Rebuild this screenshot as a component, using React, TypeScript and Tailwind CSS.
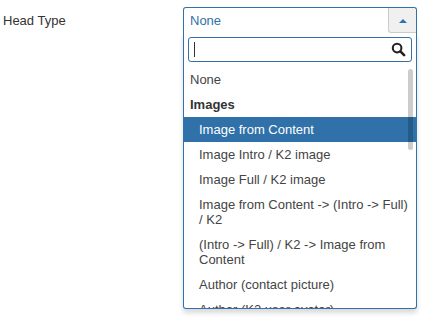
import React from "react";

const options: { label: string; group?: boolean; child?: boolean; active?: boolean }[] = [
  { label: "None" },
  { label: "Images", group: true },
  { label: "Image from Content", child: true, active: true },
  { label: "Image Intro / K2 image", child: true },
  { label: "Image Full / K2 image", child: true },
  { label: "Image from Content -> (Intro -> Full) / K2", child: true },
  { label: "(Intro -> Full) / K2 -> Image from Content", child: true },
  { label: "Author (contact picture)", child: true },
  { label: "Author (K2 user avatar)", child: true },
];

export default function App() {
  return (
    <div className="flex h-[317px] w-[423px] bg-white pt-[7px] font-['Liberation_Sans',Arial,sans-serif] text-[13px] text-[#333]">
      <div className="w-[183px] pl-[3px] pt-[6px] leading-[15px]">Head Type</div>

      <div className="relative w-[234px]">
        {/* Select box */}
        <div className="flex h-[26px] rounded-t-[3px] border border-b-0 border-[#3071a9] bg-white">
          <span className="flex-1 pl-[6px] pt-[5px] leading-[15px] text-[#3071a9]">None</span>
          <div className="flex w-[28px] items-center justify-center rounded-bl-[3px] rounded-tr-[3px] border-b border-l border-[#ccc] bg-[#f0f0f0]">
            <svg width="8" height="5" viewBox="0 0 8 5">
              <path d="M0 5 L4 1 L8 5 Z" fill="#3071a9" />
            </svg>
          </div>
        </div>

        {/* Dropdown */}
        <div className="rounded-b-[3px] border border-t-0 border-[#3071a9] bg-white shadow-[0_4px_5px_rgba(0,0,0,0.15)]">
          <div className="px-[4px] pt-[4px]">
            <div className="flex h-[25px] items-center rounded-[3px] border border-[#3071a9] px-[5px]">
              <span className="h-[15px] w-px bg-[#333]" />
              <span className="flex-1" />
              <svg width="15" height="15" viewBox="0 0 16 16">
                <circle cx="6.5" cy="6.5" r="4.6" fill="none" stroke="#222" strokeWidth="2.2" />
                <path d="M10 10 L14 14" stroke="#222" strokeWidth="2.8" strokeLinecap="round" />
              </svg>
            </div>
          </div>

          <div className="relative mt-[5px] h-[241px] overflow-hidden">
            <ul>
              {options.map((o) => (
                <li
                  key={o.label}
                  className={
                    "py-[5px] pr-[6px] leading-[15px] " +
                    (o.child ? "pl-[15px] " : "pl-[6px] ") +
                    (o.group ? "font-bold text-[#333] " : "text-[#444] ") +
                    (o.active ? "bg-[#3071a9] !text-white" : "")
                  }
                >
                  {o.label}
                </li>
              ))}
            </ul>
            {/* scrollbar thumb */}
            <div className="absolute right-[3px] top-[2px] h-[81px] w-[5px] rounded-full bg-[rgba(0,0,0,0.2)]" />
          </div>
        </div>
      </div>
    </div>
  );
}
